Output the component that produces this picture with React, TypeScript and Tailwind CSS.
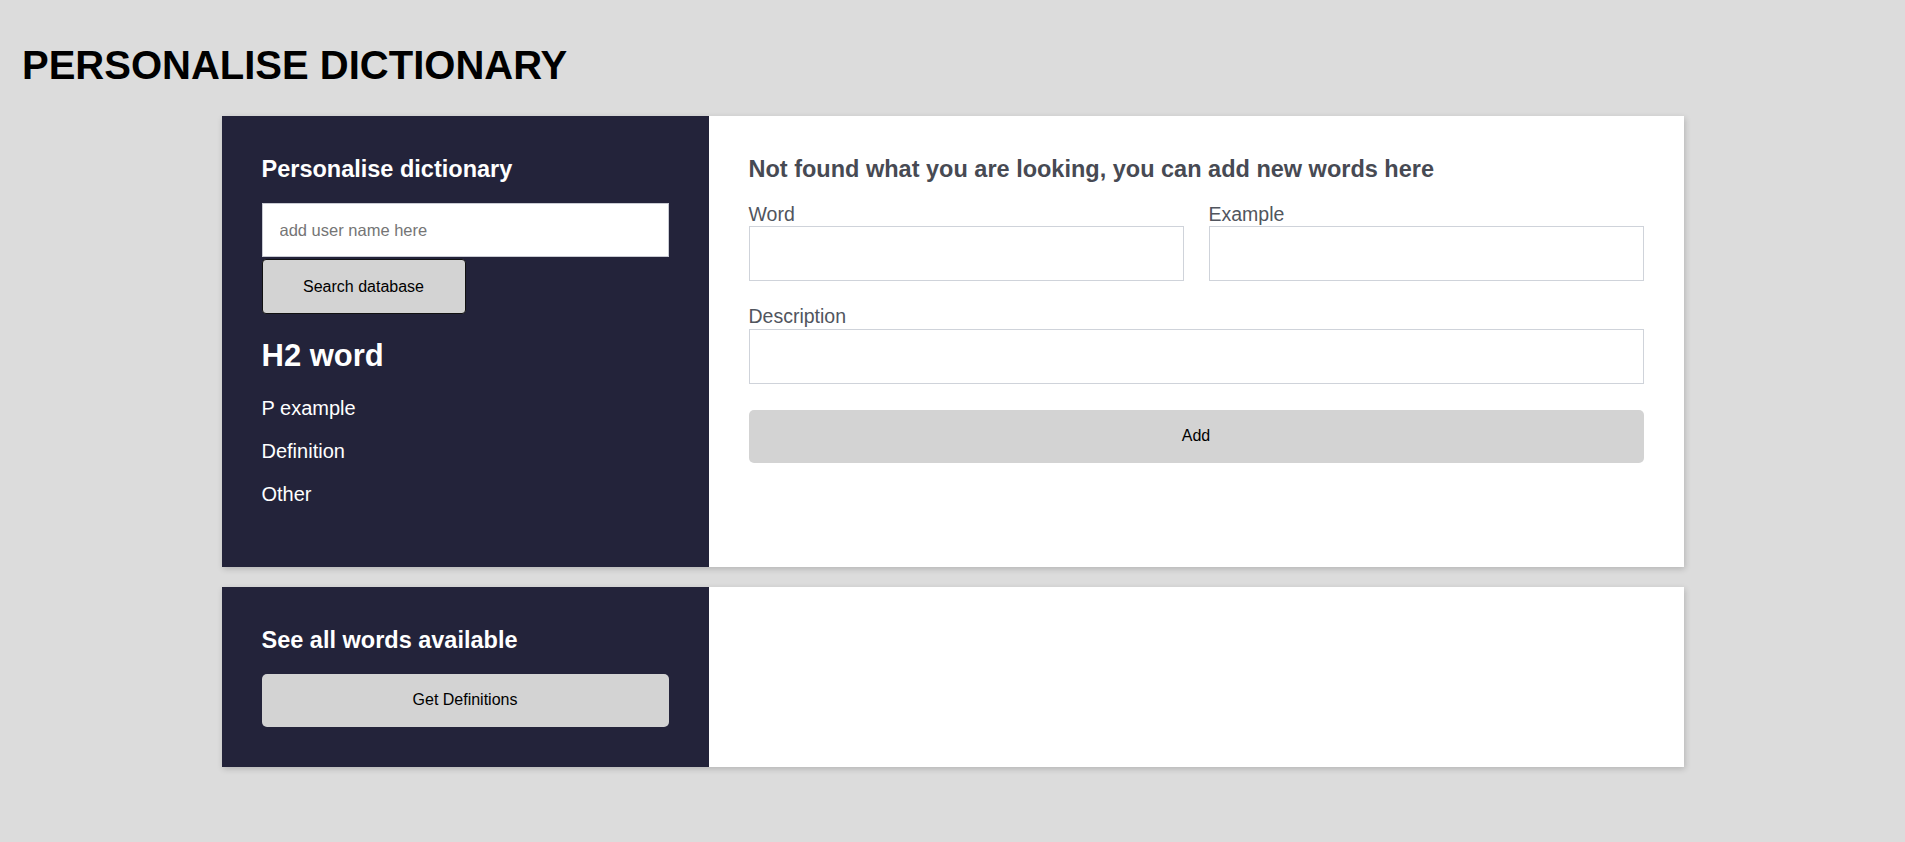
import React from 'react';

function FieldLabel({ children }: { children: React.ReactNode }) {
    return <label className="block text-[19.5px] leading-[1.15] text-[#51555e]">{children}</label>;
}

function TextField({ label }: { label: string }) {
    return (
        <div className="flex flex-col">
            <FieldLabel>{label}</FieldLabel>
            <input
                type="text"
                className="mt-px h-[55px] w-full border border-[#cfd3da] bg-white px-4 text-base outline-none"
            />
        </div>
    );
}

export default function App() {
    return (
        <div className="min-h-screen bg-[#dcdcdc] pb-16 font-['Liberation_Sans',Arial,sans-serif] leading-[1.15] text-black">
            <h1 className="pl-[22px] pt-[42px] text-[40px] font-bold leading-[1.15] text-black">PERSONALISE DICTIONARY</h1>

            <div className="mx-auto mt-[28px] flex w-[1462px] flex-col gap-5">
                {/* search + add words */}
                <div className="flex bg-white shadow-[1px_2px_6px_rgba(0,0,0,0.18)]">
                    <div className="flex w-[487px] shrink-0 flex-col bg-[#23233a] px-10 pb-[41px] pt-10 text-white">
                        <h3 className="mb-5 text-[23.5px] font-bold leading-[1.15]">Personalise dictionary</h3>
                        <input
                            type="text"
                            placeholder="add user name here"
                            className="h-[54px] w-full border border-[#c9cbd3] bg-white px-[17px] text-[16.5px] text-black outline-none placeholder:text-[#757575]"
                        />
                        <button
                            type="button"
                            className="mt-[2px] h-[55px] w-[204px] rounded border border-[#111] bg-[#d3d3d3] text-base text-black"
                        >
                            Search database
                        </button>
                        <h2 className="mt-[24px] text-[31px] font-bold leading-[1.15]">H2 word</h2>
                        <p className="mt-[23px] text-[20px] leading-[1.15]">P example</p>
                        <p className="mt-5 text-[20px] leading-[1.15]">Definition</p>
                        <p className="mt-5 mb-5 text-[20px] leading-[1.15]">Other</p>
                    </div>

                    <div className="flex flex-1 flex-col px-10 pt-10">
                        <h3 className="mb-5 text-[23.5px] font-bold leading-[1.15] text-[#474a53]">
                            Not found what you are looking, you can add new words here
                        </h3>
                        <div className="grid grid-cols-2 gap-x-[25px]">
                            <TextField label="Word" />
                            <TextField label="Example" />
                        </div>
                        <div className="mt-6">
                            <TextField label="Description" />
                        </div>
                        <button
                            type="button"
                            className="mt-[26px] h-[53px] w-full rounded-[5px] bg-[#d3d3d3] text-base text-black"
                        >
                            Add
                        </button>
                    </div>
                </div>

                {/* all words */}
                <div className="flex bg-white shadow-[1px_2px_6px_rgba(0,0,0,0.18)]">
                    <div className="flex w-[487px] shrink-0 flex-col bg-[#23233a] px-10 pb-10 pt-10 text-white">
                        <h3 className="mb-5 text-[23.5px] font-bold leading-[1.15]">See all words available</h3>
                        <button
                            type="button"
                            className="h-[53px] w-full rounded-[5px] bg-[#d3d3d3] text-base text-black"
                        >
                            Get Definitions
                        </button>
                    </div>
                    <div className="flex-1" />
                </div>
            </div>
        </div>
    );
}
